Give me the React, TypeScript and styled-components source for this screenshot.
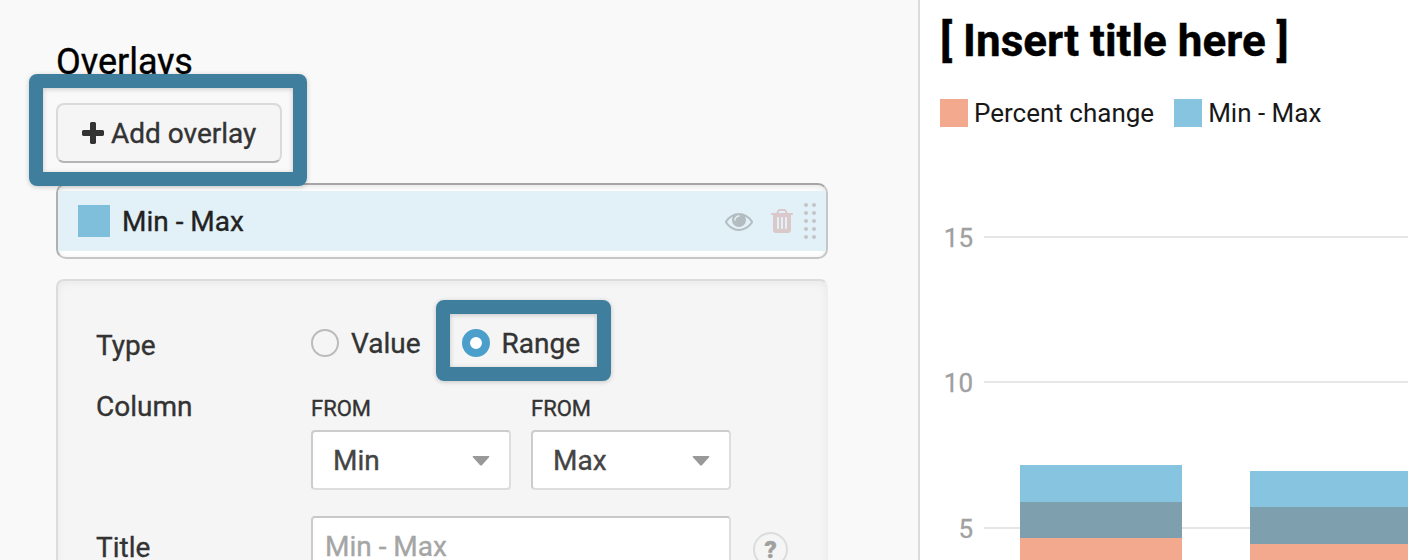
import React from "react";
import styled, { createGlobalStyle } from "styled-components";

const GlobalStyle = createGlobalStyle`
    *{
        box-sizing:border-box;
    }
    body{
        margin:0;
        background:#fff;
        font-family:Roboto, "Liberation Sans", sans-serif;
        font-size:28px;
        line-height:34px;
        color:#333;
    }
    h1,h2{
        margin:0;
    }
`
const Page = styled.div`
    display:flex;
    height:560px;
    overflow:hidden;
`
const Sidebar = styled.div`
    flex:0 0 920px;
    padding:40px 90px 0px 56px;
    background:#f9f9f9;
    border-right:2px solid #dcdcdc;
    -webkit-text-stroke:0.35px;
`
const Heading = styled.h2`
    margin-bottom:19px;
    font-size:36px;
    line-height:44px;
    font-weight:400;
    color:#000;
`
const Highlighted = styled.div`
    position:relative;
    display:inline-flex;
    align-self:flex-start;
    vertical-align:top;
`
const HighlightBox = styled.div<{ $inset: string }>`
    position:absolute;
    z-index:2;
    inset:${(p) => p.$inset};
    border:14px solid #3f7f9d;
    border-radius:8px;
    box-shadow:0px 1px 5px rgba(0,0,0,0.2), inset 0px 1px 5px rgba(0,0,0,0.2);
    pointer-events:none;
`
const AddButton = styled.button`
    width:226px;
    height:60px;
    padding:2px 0px 0px 24px;
    display:flex;
    align-items:center;
    background:#f5f5f5;
    border:2px solid #dadada;
    border-bottom-color:#b5b5b5;
    border-radius:8px;
    font-family:inherit;
    font-size:28px;
    line-height:34px;
    color:#333;
    svg{
        margin:-3px 7px 0px 0px;
    }
`
const OverlayCard = styled.div`
    margin-top:20px;
    height:76px;
    padding:6px 0px;
    background:#fff;
    border:2px solid #c6c6c6;
    border-top-color:#a6a6a6;
    border-left-color:#b0b0b0;
    border-radius:10px;
    box-shadow:inset 0px 2px 6px rgba(0,0,0,0.1);
`
const OverlayItem = styled.div`
    height:60px;
    padding:0px 10px 0px 20px;
    display:flex;
    align-items:center;
    background:#e2f0f7;
    color:#222;
    .name{
        flex:1;
        margin-left:12px;
        padding-top:2px;
    }
    .eye{
        margin:2px 18px 0px 0px;
    }
    .trash{
        margin-right:11px;
    }
`
const Swatch = styled.div<{ $size: number, $color: string }>`
    width:${(p) => p.$size}px;
    height:${(p) => p.$size}px;
    background:${(p) => p.$color};
`
const Handle = styled.div`
    display:grid;
    grid-template-columns:4px 4px;
    gap:4px;
    i{
        height:4px;
        border-radius:50%;
        background:#c4c6c8;
    }
`
const Settings = styled.div`
    margin-top:20px;
    height:340px;
    padding:45px 0px 0px 38px;
    background:#f5f5f5;
    border:2px solid #dcdcdc;
    border-right-color:#eee;
    border-radius:8px;
    box-shadow:inset 0px 2px 8px rgba(0,0,0,0.05);
`
const Row = styled.div<{ $height: number }>`
    display:flex;
    height:${(p) => p.$height}px;
`
const Label = styled.div<{ $top?: number }>`
    flex:0 0 215px;
    padding-top:${(p) => p.$top || 0}px;
`
const Radio = styled.div<{ $gap?: number }>`
    height:34px;
    margin-right:${(p) => p.$gap || 0}px;
    display:flex;
    align-items:center;
    span{
        padding-top:2px;
    }
`
const RadioMark = styled.div<{ $checked?: boolean }>`
    width:28px;
    height:28px;
    margin-right:12px;
    border-radius:50%;
    background:${(p) => (p.$checked ? "#fff" : "transparent")};
    border:${(p) => (p.$checked ? "8px solid #4b9fca" : "2px solid #bbb")};
`
const Field = styled.div`
    width:200px;
    margin-right:20px;
    padding-top:6px;
`
const FieldLabel = styled.div`
    margin-bottom:8px;
    font-size:22px;
    line-height:26px;
`
const Select = styled.div`
    height:60px;
    padding:2px 19px 0px 20px;
    display:flex;
    align-items:center;
    justify-content:space-between;
    background:#fff;
    border:2px solid #ddd;
    border-top-color:#ccc;
    border-left-color:#ccc;
    border-radius:4px;
    color:#444;
`
const TextInput = styled.input`
    width:420px;
    height:60px;
    padding:0px 12px;
    background:#fff;
    border:2px solid #ddd;
    border-top-color:#c8c8c8;
    border-left-color:#ccc;
    border-radius:4px;
    font-family:inherit;
    font-size:28px;
    &::placeholder{
        color:#a5a5a5;
        opacity:1;
    }
`
const Help = styled.div`
    width:35px;
    height:35px;
    margin:16px 0px 0px 22px;
    border:2px solid #dcdcdc;
    border-radius:50%;
    text-align:center;
    font-size:24px;
    line-height:32px;
    font-weight:900;
    color:#a0a0a0;
`
const Preview = styled.div`
    flex:1;
    padding:14px 0px 0px 20px;
    background:#fff;
`
const Title = styled.h1`
    font-size:44px;
    line-height:54px;
    font-weight:700;
    color:#000;
    -webkit-text-stroke:0.4px;
`
const Legend = styled.div`
    display:flex;
    align-items:center;
    margin-top:28px;
    font-size:26px;
    color:#181818;
    span{
        margin:0px 20px 0px 6px;
    }
`
const Chart = styled.svg`
    display:block;
    margin-top:14px;
    text{
        font-size:26px;
        fill:#a0a0a0;
        stroke:#a0a0a0;
        stroke-width:0.3px;
        text-anchor:end;
    }
`

const PlusIcon = () => (
    <svg width="22" height="22" viewBox="0 0 1408 1408" fill="#333">
        <path d="M1408 608v192q0 40-28 68t-68 28H896v416q0 40-28 68t-68 28H608q-40 0-68-28t-28-68V896H96q-40 0-68-28T0 800V608q0-40 28-68t68-28h416V96q0-40 28-68t68-28h192q40 0 68 28t28 68v416h416q40 0 68 28t28 68z" />
    </svg>
)

const EyeIcon = () => (
    <svg className="eye" width="28" height="18" viewBox="0 384 1792 1152" fill="#b3bdc1">
        <path d="M1664 960q-152-236-381-353q61 104 61 225q0 185-131.5 316.5t-316.5 131.5t-316.5-131.5t-131.5-316.5q0-121 61-225q-229 117-381 353q133 205 333.5 326.5t434.5 121.5t434.5-121.5t333.5-326.5zM944 576q0-20-14-34t-34-14q-125 0-214.5 89.5t-89.5 214.5q0 20 14 34t34 14t34-14t14-34q0-86 61-147t147-61q20 0 34-14t14-34zM1792 960q0 34-20 69q-140 230-376.5 368.5t-499.5 138.5t-499.5-139t-376.5-368q-20-35-20-69t20-69q140-229 376.5-368t499.5-139t499.5 139t376.5 368q20 35 20 69z" />
    </svg>
)

const TrashIcon = () => (
    <svg className="trash" width="22" height="24" viewBox="0 128 1408 1536" fill="#dbc8cb">
        <path d="M512 1376V672q0-14-9-23t-23-9h-64q-14 0-23 9t-9 23v704q0 14 9 23t23 9h64q14 0 23-9t9-23zM768 1376V672q0-14-9-23t-23-9h-64q-14 0-23 9t-9 23v704q0 14 9 23t23 9h64q14 0 23-9t9-23zM1024 1376V672q0-14-9-23t-23-9h-64q-14 0-23 9t-9 23v704q0 14 9 23t23 9h64q14 0 23-9t9-23zM480 384h448l-48-117q-7-9-17-11H546q-10 2-17 11zM1408 416v64q0 14-9 23t-23 9h-96v948q0 83-47 143.5t-113 60.5H288q-66 0-113-58.5t-47-141.5V512H32q-14 0-23-9t-9-23v-64q0-14 9-23t23-9h309l70-167q15-37 54-63t79-26h320q40 0 79 26t54 63l70 167h309q14 0 23 9t9 23z" />
    </svg>
)

const Caret = () => (
    <svg width="18" height="10" viewBox="0 0 18 10" fill="#999">
        <path d="M1.500 0h15q1.500 0 .6 1.200l-7 7.800q-1.100 1-2.200 0l-7-7.800q-.9-1.200.6-1.200z" />
    </svg>
)

const ticks = [
    { label: "15", y: 93 },
    { label: "10", y: 238 },
    { label: "5", y: 384 },
]

// top / range start / value line of each column
const bars = [
    { x: 80, top: 321, mid: 358, low: 394 },
    { x: 310, top: 327, mid: 363, low: 400 },
]

interface SelectFieldProps {
    value: string
}

const SelectField: React.FC<SelectFieldProps> = ({ value }) => (
    <Field>
        <FieldLabel>FROM</FieldLabel>
        <Select>{value}<Caret /></Select>
    </Field>
)

const App: React.FC = () => {
    return (
        <>
        <GlobalStyle />
        <Page>
            <Sidebar>
                <Heading>Overlays</Heading>
                <Highlighted>
                    <AddButton><PlusIcon />Add overlay</AddButton>
                    <HighlightBox $inset="-29px -25px -23px -27px" />
                </Highlighted>
                <OverlayCard>
                    <OverlayItem>
                        <Swatch $size={32} $color="#7fbfdb" />
                        <div className="name">Min - Max</div>
                        <EyeIcon />
                        <TrashIcon />
                        <Handle>
                            {Array.from({ length: 10 }, (_, i) => <i key={i} />)}
                        </Handle>
                    </OverlayItem>
                </OverlayCard>
                <Settings>
                    <Row $height={64}>
                        <Label $top={3}>Type</Label>
                        <Radio $gap={41}><RadioMark /><span>Value</span></Radio>
                        <Highlighted>
                            <Radio><RadioMark $checked /><span>Range</span></Radio>
                            <HighlightBox $inset="-26px -31px -21px -26px" />
                        </Highlighted>
                    </Row>
                    <Row $height={126}>
                        <Label>Column</Label>
                        <SelectField value="Min" />
                        <SelectField value="Max" />
                    </Row>
                    <Row $height={60}>
                        <Label $top={15}>Title</Label>
                        <TextInput placeholder="Min - Max" />
                        <Help>?</Help>
                    </Row>
                </Settings>
            </Sidebar>
            <Preview>
                <Title>[ Insert title here ]</Title>
                <Legend>
                    <Swatch $size={28} $color="#f3a98d" /><span>Percent change</span>
                    <Swatch $size={28} $color="#87c4df" /><span>Min - Max</span>
                </Legend>
                <Chart width="468" height="416">
                    {ticks.map((t) => (
                        <g key={t.label}>
                            <rect x="44" y={t.y - 1} width="424" height="2" fill="#e6e6e6" />
                            <text x="33" y={t.y + 10}>{t.label}</text>
                        </g>
                    ))}
                    {bars.map((b) => (
                        <g key={b.x}>
                            <rect x={b.x} y={b.top} width="162" height={b.mid - b.top} fill="#87c4df" />
                            <rect x={b.x} y={b.mid} width="162" height={b.low - b.mid} fill="#7d9fae" />
                            <rect x={b.x} y={b.low} width="162" height={416 - b.low} fill="#f3a98d" />
                        </g>
                    ))}
                </Chart>
            </Preview>
        </Page>
        </>
    )
}

export default App
